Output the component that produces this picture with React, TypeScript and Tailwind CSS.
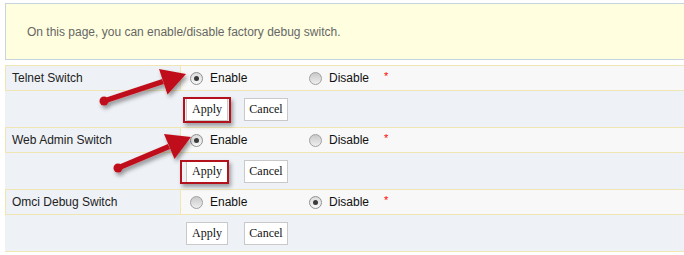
import React from "react";

type Row = {
  label: string;
  value: "enable" | "disable";
  highlight?: "a" | "b";
};

const rows: Row[] = [
  { label: "Telnet Switch", value: "enable", highlight: "a" },
  { label: "Web Admin Switch", value: "enable", highlight: "b" },
  { label: "Omci Debug Switch", value: "disable" },
];

function Radio({ checked }: { checked: boolean }) {
  return (
    <span
      className={
        checked
          ? "relative inline-flex h-[13px] w-[13px] shrink-0 items-center justify-center rounded-full border border-[#8f9091] bg-gradient-to-b from-[#dcdcdc] to-[#f7f7f7]"
          : "relative inline-flex h-[13px] w-[13px] shrink-0 items-center justify-center rounded-full border border-[#a0a0a0] bg-gradient-to-b from-[#c9c9c9] to-[#efefef]"
      }
    >
      {checked ? <span className="h-[5px] w-[5px] rounded-full bg-[#3a3a3a]" /> : null}
    </span>
  );
}

function Arrow({ tail, tip, a, b, base }: { tail: [number, number]; tip: [number, number]; a: [number, number]; b: [number, number]; base: [number, number] }) {
  return (
    <g filter="url(#shadow)">
      <line x1={tail[0]} y1={tail[1]} x2={base[0]} y2={base[1]} stroke="#c0101a" strokeWidth="5.5" />
      <circle cx={tail[0]} cy={tail[1]} r="4.5" fill="#c0101a" />
      <polygon points={`${tip[0]},${tip[1]} ${a[0]},${a[1]} ${b[0]},${b[1]}`} fill="#c0101a" />
    </g>
  );
}

export default function App() {
  return (
    <div className="relative h-[255px] w-[684px] overflow-hidden bg-white pl-[5px] pt-[3px] font-['Liberation_Sans',Arial,sans-serif] text-[12px]">
      <div className="flex h-[57px] items-center border border-r-0 border-[#c6d4e0] bg-[#ffffdf] pl-[21px] text-[#666]">
        On this page, you can enable/disable factory debug switch.
      </div>

      <div className="mt-[5px] border-b border-[#f0e6b4]">
        {rows.map((row) => (
          <div key={row.label}>
            <div className="flex h-[25px] border-t border-[#f0e6b4] bg-[#f8f8f8]">
              <div className="flex w-[176px] items-center border-x border-[#f0e6b4] bg-[#eef1f6] pl-[6px] text-[#222]">
                {row.label}
              </div>
              <div className="flex items-center pl-[9px] text-[#111]">
                <label className="flex w-[119px] items-center gap-[7px]">
                  <Radio checked={row.value === "enable"} />
                  <span>Enable</span>
                </label>
                <label className="flex w-[75px] items-center gap-[7px]">
                  <Radio checked={row.value === "disable"} />
                  <span>Disable</span>
                </label>
                <span className="-mt-[3px] text-[11px] text-[#ff0000]">*</span>
              </div>
            </div>
            <div className="flex h-[37px] items-center border-t border-[#f0e6b4] bg-[#eef1f6] pl-[181px] font-['Liberation_Serif','Times_New_Roman',serif]">
              <span className="relative">
                <button
                  type="button"
                  className="h-[23px] w-[42px] border border-[#c9c9c9] bg-white text-[12px] text-[#111]"
                >
                  Apply
                </button>
                {row.highlight === "a" ? (
                  <span className="absolute -bottom-[2px] -left-[3px] -right-[3px] -top-[1px] border-2 border-[#b3121c] shadow-[2px_3px_4px_rgba(0,0,0,0.35)]" />
                ) : null}
                {row.highlight === "b" ? (
                  <span className="absolute -left-[6px] -right-[1px] top-0 -bottom-[1px] border-2 border-[#b3121c] shadow-[2px_3px_4px_rgba(0,0,0,0.35)]" />
                ) : null}
              </span>
              <button
                type="button"
                className="ml-[16px] h-[23px] w-[44px] border border-[#c9c9c9] bg-white text-[12px] text-[#111]"
              >
                Cancel
              </button>
            </div>
          </div>
        ))}
      </div>

      <svg className="pointer-events-none absolute left-0 top-0" width="684" height="255" viewBox="0 0 684 255">
        <defs>
          <filter id="shadow" x="-20%" y="-20%" width="140%" height="160%">
            <feDropShadow dx="2" dy="3" stdDeviation="2" floodColor="#000" floodOpacity="0.4" />
          </filter>
        </defs>
        <Arrow tail={[104, 101]} tip={[186, 74]} base={[163, 81.5]} a={[167.5, 94.5]} b={[159, 69]} />
        <Arrow tail={[118, 168]} tip={[191, 137]} base={[169, 146.5]} a={[174.5, 159]} b={[164, 134]} />
      </svg>
    </div>
  );
}
